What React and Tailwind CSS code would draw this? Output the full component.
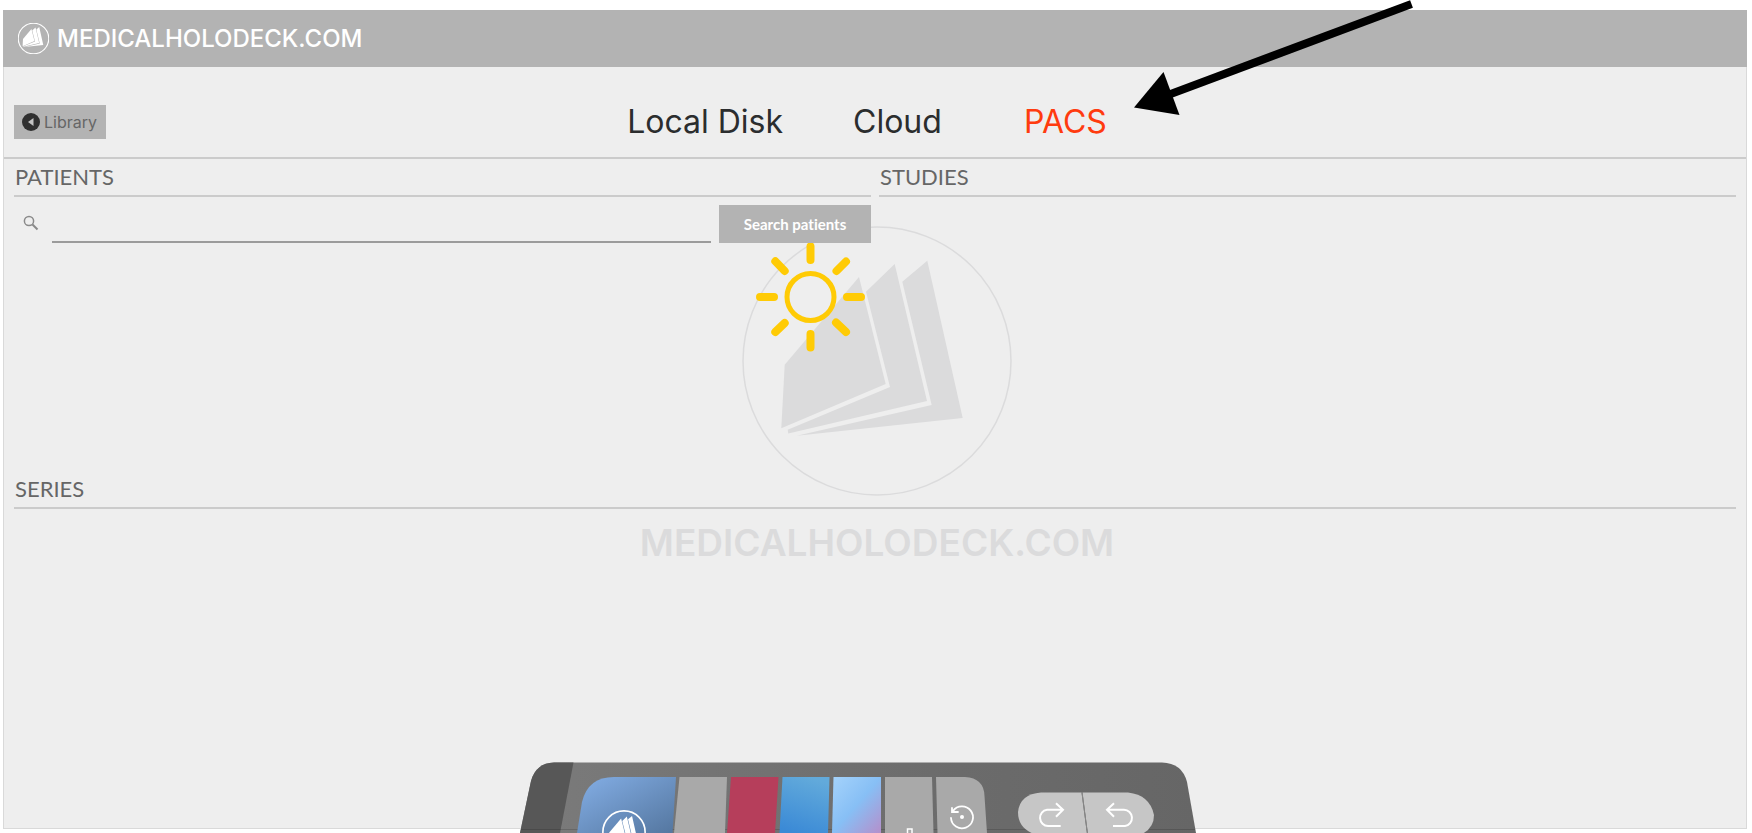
const TABS = [
  { id: 'local', label: 'Local Disk', style: 'text-[#2b2d2e]' },
  { id: 'cloud', label: 'Cloud', style: 'text-[#2b2d2e]' },
  { id: 'pacs', label: 'PACS', style: 'pl-3 text-[#ff3b0f]' },
]

// Three fanned pages, shared by the header, the watermark and the home tile
const Pages = () => (
  <>
    <path d="M784.7 364.7 859 277l26.7 107-104.4 44.3z" />
    <path d="M866 291.7 894.7 264 927 401l-138.7 32.5-.6-3.8L890 387z" />
    <path d="M902.3 281.7 927.3 260.7 962.7 418l-166 17.7 135-30.7z" />
  </>
)

const Logo = ({ className, ring }) => (
  <svg viewBox="741 225 272 272" className={className} fill="currentColor" aria-hidden="true">
    <circle cx="877" cy="361" r="134" fill="none" stroke="currentColor" strokeWidth={ring} />
    <Pages />
  </svg>
)

const Watermark = () => (
  <div className="pointer-events-none absolute inset-x-0 top-[225px] flex flex-col items-center pl-0.5 text-[#dbdbdc]">
    <Logo className="size-[272px]" ring="1.5" />
    <p className="mt-[21px] font-['Inter',sans-serif] text-[37px] leading-[50px] font-semibold">
      MEDICALHOLODECK.COM
    </p>
  </div>
)

const Sun = () => (
  <svg
    viewBox="756 242 109 110"
    className="pointer-events-none absolute top-[242px] left-1/2 -ml-[120px] h-[110px] w-[109px]"
    fill="none"
    stroke="#ffcb05"
    strokeLinecap="round"
    role="img"
    aria-label="Loading"
  >
    <circle cx="810.5" cy="297" r="23.5" strokeWidth="5" />
    <path
      strokeWidth="8"
      d="M810.5 246.5V260M810.5 334v13.5M760 297h14M847 297h14M775.3 261.3l9.4 9.7M846 261.5l-9.5 9.5M775.3 332l9.4-9M846 332l-10-9.5"
    />
  </svg>
)

const Pointer = () => (
  <svg
    viewBox="1134 0 280 120"
    className="pointer-events-none absolute top-0 left-1/2 ml-[258px] h-[120px] w-[280px]"
    aria-hidden="true"
  >
    <path d="M1411.5 4 1168 95" stroke="#000" strokeWidth="8" />
    <path d="M1134 107.5 1163.5 72l16 43z" />
  </svg>
)

const SectionTitle = ({ id, children }) => (
  <h2
    id={id}
    className="h-[38px] border-b-2 border-[#cbcbcb] pl-px font-['Lato',sans-serif] text-[22px] leading-9 text-[#666]"
  >
    {children}
  </h2>
)

// Tiles are drawn in one shared coordinate space, each button shows its own slice
const TILES = [
  { name: 'Home', box: '576 777 98 56', width: 'w-[98px]', d: 'M577 833 582 802Q588 777 614 777H676L672.5 833z', fill: 'url(#home)' },
  { name: 'Empty slot', box: '674 777 52 56', width: 'w-[52px]', d: 'M674 833 679.5 777H727L725 833z', fill: '#a9a9a9' },
  { name: 'Red slot', box: '726 777 52 56', width: 'w-[52px]', d: 'M727 833 731 777H778.5L775 833z', fill: '#b63e5b' },
  { name: 'Blue slot', box: '778 777 53 56', width: 'w-[53px]', d: 'M779.5 833 782.5 777H829.5L828 833z', fill: 'url(#blue)' },
  { name: 'Gradient slot', box: '831 777 52 56', width: 'w-[52px]', d: 'M832 833 833.5 777H881V833z', fill: 'url(#sky)' },
  { name: 'Tool', box: '883 777 52 56', width: 'w-[52px]', d: 'M885 833V777H932L933.5 833z', fill: '#a9a9a9' },
  { name: 'Reset', box: '935 777 52 56', width: 'w-[52px]', d: 'M937.5 833 936 777H965Q984 778 984.5 796L987 833z', fill: '#a9a9a9' },
]

const TileIcon = ({ name }) => {
  if (name === 'Home') {
    return (
      <g fill="#fff" transform="translate(624 832) scale(.16) translate(-877 -361)">
        <circle cx="877" cy="361" r="132" fill="none" stroke="#fff" strokeWidth="10" />
        <Pages />
      </g>
    )
  }
  if (name === 'Tool') {
    return <path d="M907.5 834v-5h4.5v5" fill="none" stroke="#fff" strokeWidth="1.5" />
  }
  if (name === 'Reset') {
    return (
      <g fill="none" stroke="#fff" strokeWidth="1.8" strokeLinecap="round">
        <path d="M951 818A11 11 0 1 0 953 811M952 808v4h6" />
        <circle cx="962" cy="817" r="2" fill="#fff" stroke="none" />
      </g>
    )
  }
  return null
}

const Toolbar = () => (
  <div
    role="toolbar"
    aria-label="Tools"
    className="absolute bottom-0 left-1/2 -ml-[356px] flex h-[71px] w-[676px] items-end overflow-hidden pl-14"
  >
    <svg viewBox="520 762 676 71" className="absolute inset-0 h-full w-full" aria-hidden="true">
      <defs>
        <linearGradient id="tray" x1="0" x2="1">
          <stop offset="0" stopColor="#7b7b7b" />
          <stop offset=".65" stopColor="#6b6b6b" />
          <stop offset="1" stopColor="#666" />
        </linearGradient>
        <linearGradient id="home" x1="0" y1="0" x2="1" y2="1">
          <stop offset=".1" stopColor="#7fa9df" />
          <stop offset="1" stopColor="#54769f" />
        </linearGradient>
        <linearGradient id="blue" x1=".6" y1="0" x2=".3" y2="1">
          <stop offset="0" stopColor="#62aadb" />
          <stop offset="1" stopColor="#3b8ad6" />
        </linearGradient>
        <linearGradient id="sky" x1="0" y1="0" x2="1" y2="1">
          <stop offset="0" stopColor="#a5d3fb" />
          <stop offset=".5" stopColor="#87bff5" />
          <stop offset="1" stopColor="#b58fcb" />
        </linearGradient>
      </defs>
      <path d="M520 833 531 781Q536 763 554 762.5H1162Q1182 763 1187 782L1196 833z" fill="url(#tray)" />
      <path d="M520 833 531 781Q536 763 554 762.5H573.5L560 833z" fill="#575757" />
      <path d="M521 829.5H1195" stroke="#000" strokeOpacity=".15" />
    </svg>
    {TILES.map(({ name, box, width, d, fill }) => (
      <button key={name} aria-label={name} className={`relative h-14 shrink-0 ${width}`}>
        <svg viewBox={box} className="block h-full w-full overflow-visible">
          <path d={d} fill={fill} />
          <TileIcon name={name} />
        </svg>
      </button>
    ))}
    <div className="relative ml-[31px] flex h-[41px]">
      <button aria-label="Redo" className="w-[66px]">
        <svg viewBox="1018 792 66 41" className="block h-full w-full overflow-visible">
          <path d="M1081.5 792.5H1041Q1020 794 1018 812 1018 828 1034 834H1087z" fill="#c6c6c6" />
          <path
            d="M1056 803.3l7 6.4-7 7M1063 809.7h-16a8.2 8.2 0 0 0 1 16.3h12.7"
            fill="none"
            stroke="#fff"
            strokeWidth="2"
          />
        </svg>
      </button>
      <button aria-label="Undo" className="w-[70px]">
        <svg viewBox="1084 792 70 41" className="block h-full w-full overflow-visible">
          <path d="M1082.5 792.5H1128Q1150 795 1154 815 1154 828 1142 834H1088z" fill="#c6c6c6" />
          <path d="M1082 792.5 1087.5 834" stroke="#888" />
          <path
            d="M1114 803.3l-7 6.4 7 7M1107 809.7h17a8.2 8.2 0 0 1 1 16.3h-12"
            fill="none"
            stroke="#fff"
            strokeWidth="2"
          />
        </svg>
      </button>
    </div>
  </div>
)

const App = () => (
  <div className="relative flex min-h-screen flex-col overflow-hidden bg-white pt-2.5 pr-[5px] pb-1 pl-[3px] font-['Inter',sans-serif]">
    <div className="flex flex-1 flex-col border border-t-0 border-[#d9d9d9] bg-[#eee]">
      <header className="-mx-px flex h-[57px] items-center gap-2 bg-[#b3b3b3] pl-[15px] text-white">
        <Logo className="size-[31px]" ring="10" />
        <span className="text-2xl font-medium">MEDICALHOLODECK.COM</span>
      </header>

      <div className="grid h-[92px] grid-cols-[1fr_auto_1fr] items-center border-b-2 border-[#cbcbcb] px-2.5 pt-5">
        <div>
          <button className="flex h-[34px] w-[92px] items-center gap-1 bg-[#b3b3b3] pl-2 text-base text-[#666]">
            <svg viewBox="0 0 18 18" className="size-[18px] shrink-0" aria-hidden="true">
              <circle cx="9" cy="9" r="9" fill="#303030" />
              <path d="M11.5 5v8L6 9z" fill="#c4c4c4" />
            </svg>
            Library
          </button>
        </div>
        <nav className="flex gap-[70px] pr-4 text-[32px] leading-10">
          {TABS.map(({ id, label, style }) => (
            <a key={id} href={`#${id}`} className={style}>
              {label}
            </a>
          ))}
        </nav>
      </div>

      <main className="relative flex flex-1 flex-col px-2.5">
        <div className="grid flex-[312_1_0px] grid-cols-2 gap-2">
          <section className="relative z-10" aria-labelledby="patients">
            <SectionTitle id="patients">PATIENTS</SectionTitle>
            <form className="mt-2 flex h-[38px] gap-2" onSubmit={(e) => e.preventDefault()}>
              <label htmlFor="search" className="w-[30px] pt-[10px] pl-[9px]" aria-label="Search">
                <svg viewBox="0 0 16 16" className="size-4" fill="none" stroke="#8a8a8a">
                  <circle cx="6" cy="6" r="4.6" strokeWidth="1.5" />
                  <path d="M9.5 9.5 14.5 14.5" strokeWidth="2" />
                </svg>
              </label>
              <input
                id="search"
                type="text"
                className="min-w-0 flex-1 border-b-2 border-[#9b9b9b] bg-transparent outline-none"
              />
              <button className="w-[152px] bg-[#b3b3b3] font-['Lato',sans-serif] text-[15px] font-bold text-white [font-variant-ligatures:none]">
                Search patients
              </button>
            </form>
          </section>
          <section aria-labelledby="studies">
            <SectionTitle id="studies">STUDIES</SectionTitle>
          </section>
        </div>
        <section className="flex-[357_1_0px]" aria-labelledby="series">
          <SectionTitle id="series">SERIES</SectionTitle>
        </section>
      </main>
    </div>

    <Watermark />
    <Sun />
    <Pointer />
    <Toolbar />
  </div>
)

export default App
